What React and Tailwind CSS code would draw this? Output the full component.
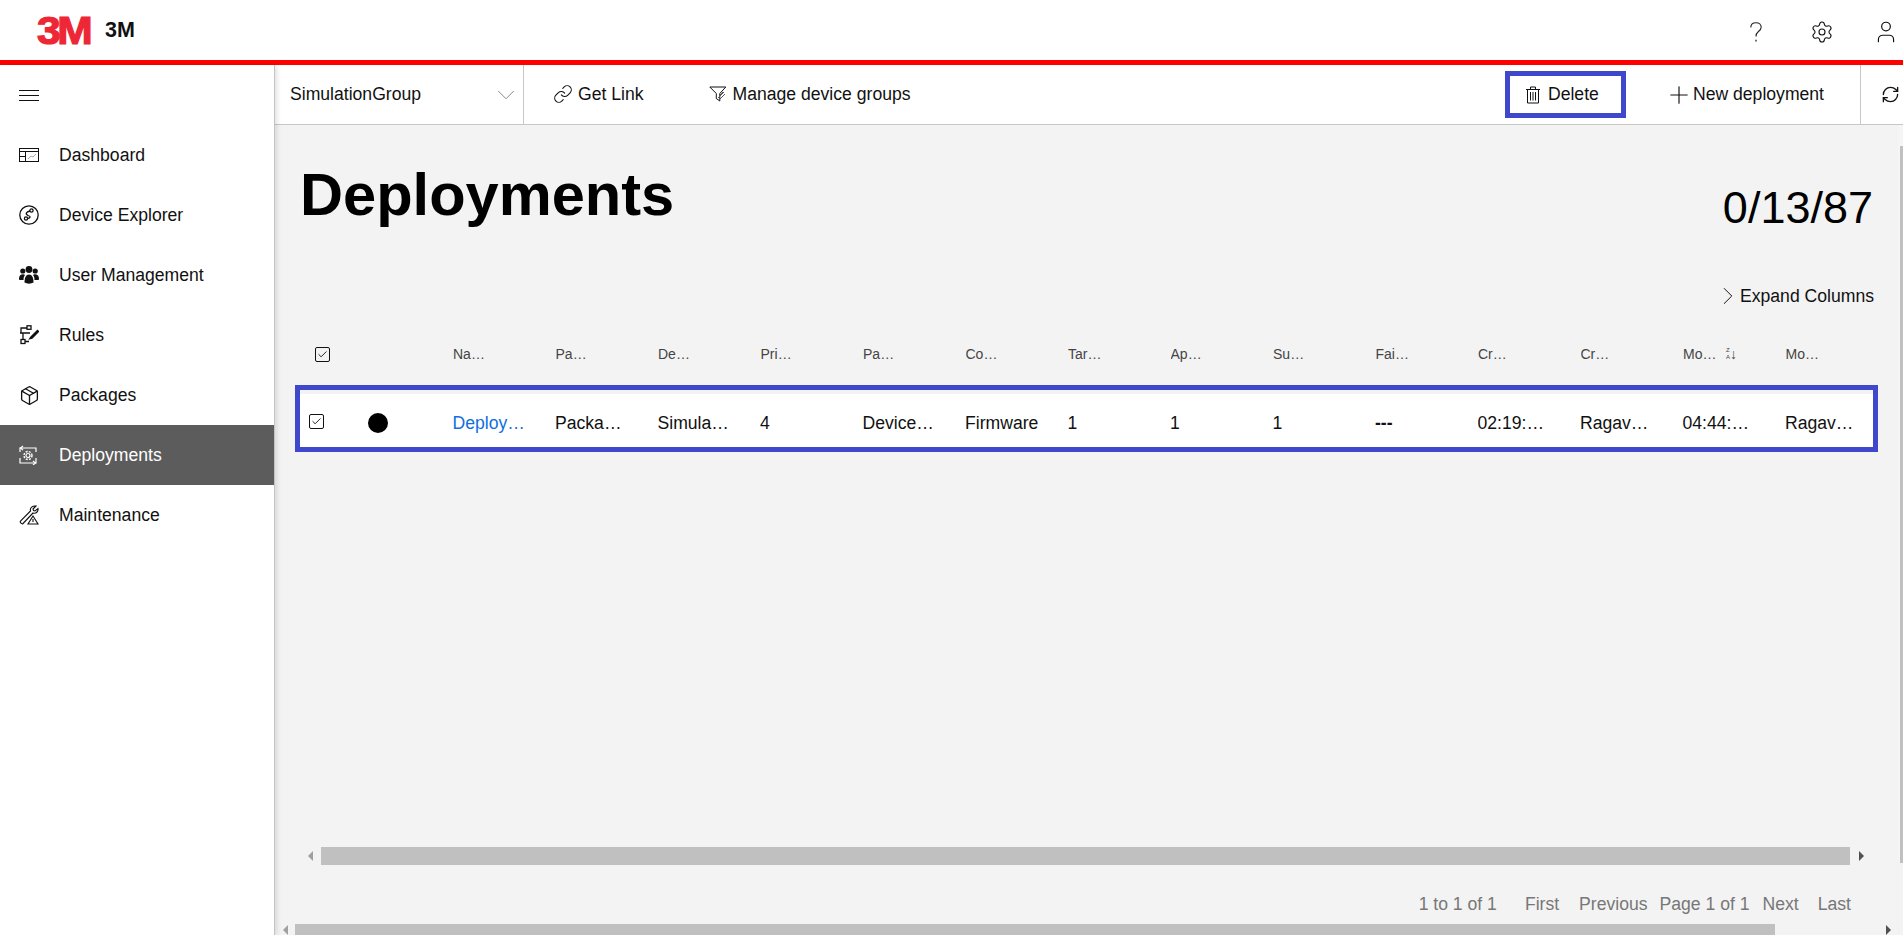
import React from "react";
import { Settings, User, ChevronDown, ChevronRight, Link, Plus, RefreshCw, Package, Check } from "lucide-react";

const DashboardIcon = () => (
  <svg width="20" height="14" viewBox="0 0 20 14" fill="none" stroke="#111" strokeWidth="1">
    <rect x="0.5" y="0.5" width="19" height="13" />
    <path d="M0.5 3.5H19.5M6.5 3.5V13.5M0.5 8.5H6.5" />
    <path d="M9 11l3-3 2 1 3-3" stroke="#aaa" />
  </svg>
);

const ExplorerIcon = () => (
  <svg width="20" height="20" viewBox="0 0 20 20" fill="none" stroke="#111" strokeWidth="1.3">
    <circle cx="10" cy="10" r="9.2" />
    <circle cx="12.5" cy="5.5" r="1.6" />
    <circle cx="7" cy="13.5" r="1.6" />
    <path d="M11 6c-4 1-5 3-2 4.500 3 1 3 2.500-.8 3.200" />
  </svg>
);

const UsersIcon = () => (
  <svg width="20" height="18" viewBox="0 0 20 18" fill="#111">
    <circle cx="3.800" cy="5" r="2.600" />
    <circle cx="16.200" cy="5" r="2.600" />
    <circle cx="10" cy="3.500" r="3.400" />
    <path d="M0 12.500C0 9.800 1.800 8.300 4 8.300c.9 0 1.500.3 2 .7-1 1.200-1.500 2.800-1.500 5H1c-.6 0-1-.5-1-1.500z" />
    <path d="M20 12.500c0-2.700-1.800-4.200-4-4.200-.9 0-1.500.3-2 .7 1 1.200 1.500 2.800 1.500 5H19c.6 0 1-.5 1-1.500z" />
    <path d="M5.500 16.500c0-5 1.500-8 4.500-8s4.500 3 4.500 8c-2.500 1.500-6.500 1.500-9 0z" />
  </svg>
);

const RulesIcon = () => (
  <svg width="20" height="20" viewBox="0 0 20 20" fill="none" stroke="#111" strokeWidth="1.3">
    <rect x="8" y="0.800" width="4" height="3.500" />
    <rect x="2" y="14.500" width="4" height="4" />
    <path d="M8 3H2v5h9M1 8h2M4 8v6.500M6 16.500h4" />
    <path d="M12 12l6.500-6.500 1 1L13 13l-2 .5z" strokeWidth="1.500" />
  </svg>
);

const DeployIcon = () => (
  <svg width="18" height="20" viewBox="0 0 18 20" fill="none" stroke="#fff" strokeWidth="1.2">
    <path d="M1 7V3h16v4M1 13v5h16v-5" />
    <path d="M4 1L1.500 3 4 5M14 16l2.500 2-2.500 2" />
    <circle cx="9" cy="10.500" r="2" />
    <circle cx="9" cy="10.500" r="4" strokeDasharray="2 1.200" strokeWidth="1.400" />
  </svg>
);

const MaintenanceIcon = () => (
  <svg width="20" height="20" viewBox="0 0 20 20" fill="none" stroke="#111" strokeWidth="1.1">
    <path d="M17 1l-3 3 .5 1.500L16 6l3-2.500c.5 3-2 5.500-5 4.500L4 18.500c-1 1-3.500-1-2.500-2.500L11.500 6c-.8-3 2-5.500 5.500-5z" />
    <path d="M14 11l-5 8h10z" />
    <path d="M14 14v3" />
  </svg>
);

const FunnelIcon = () => (
  <svg width="18" height="17" viewBox="0 0 18 17" fill="none" stroke="#111" strokeWidth="1">
    <path d="M0.800 1h16l-6 6.500V15l-3.500-2.500v-5z" />
    <path d="M9 12l6-6M11 13l5-5M10 10l4-4" stroke="#555" />
  </svg>
);

const HelpIcon = () => (
  <svg width="12" height="20" viewBox="0 0 12 20" fill="none" stroke="#222" strokeWidth="1.1">
    <path d="M0.800 5.500C0.800 2.500 3 0.700 6 0.700s5.200 2 5.200 4.500c0 2.300-1.500 3.400-3 4.500C6.800 10.800 6 11.800 6 14.500" />
    <path d="M6 17.800v1.600" strokeWidth="1.300" />
  </svg>
);

const TrashIcon = () => (
  <svg width="14" height="18" viewBox="0 0 14 18" fill="none" stroke="#111" strokeWidth="1">
    <path d="M0 3.500h14M4.500 3.500V1h5v2.500" />
    <path d="M1.500 3.500v13.500h11V3.500" />
    <path d="M4.500 6v8.500M7 6v8.500M9.500 6v8.500" />
  </svg>
);

const navItems = [
  { label: "Dashboard", icon: <DashboardIcon /> },
  { label: "Device Explorer", icon: <ExplorerIcon /> },
  { label: "User Management", icon: <UsersIcon /> },
  { label: "Rules", icon: <RulesIcon /> },
  { label: "Packages", icon: <Package size={21} strokeWidth={1.5} color="#111" /> },
  { label: "Deployments", icon: <DeployIcon />, active: true },
  { label: "Maintenance", icon: <MaintenanceIcon /> },
];

const columns = [
  { head: "Name", value: "Deployment1", link: true },
  { head: "Package", value: "Package1" },
  { head: "Device group", value: "SimulationGroup" },
  { head: "Priority", value: "4" },
  { head: "Package type", value: "DeviceConfig" },
  { head: "Config type", value: "Firmware" },
  { head: "Targeted", value: "1" },
  { head: "Applied", value: "1" },
  { head: "Succeeded", value: "1" },
  { head: "Failed", value: "---", bold: true },
  { head: "Created on", value: "02:19:45 PM" },
  { head: "Created by", value: "Ragavendra" },
  { head: "Modified on", value: "04:44:10 PM", sorted: true },
  { head: "Modified by", value: "Ragavendra" },
];

const Box = () => (
  <span className="flex h-[15px] w-[15px] items-center justify-center rounded-[2px] border border-[#111]">
    <Check size={11} strokeWidth={2} color="#111" />
  </span>
);

const Arrow = ({ left, color = "#a0a0a0" }) => (
  <span
    className={`h-0 w-0 border-y-[5px] border-y-transparent ${left ? "border-r-[5px]" : "border-l-[5px]"}`}
    style={left ? { borderRightColor: color } : { borderLeftColor: color }}
  />
);

export default function App() {
  return (
    <div className="flex h-screen flex-col overflow-hidden bg-white text-[17.6px] text-[#111] font-['Liberation_Sans',Arial,sans-serif]">
      <header className="flex h-[65px] shrink-0 items-center border-b-[5px] border-[#ff0000] bg-white pl-[37px]">
        <span className="mt-[1px] w-[54px] origin-left scale-x-[1.12] text-[38px] font-bold leading-none tracking-[-3px] text-[#ee2737] [-webkit-text-stroke:1.2px_#ee2737]">3M</span>
        <span className="ml-[14px] mt-[1px] text-[21.500px] font-bold">3M</span>
        <div className="ml-auto mt-[4px] flex items-center">
          <HelpIcon />
          <Settings size={24} strokeWidth={1.1} className="ml-[48px]" />
          <User size={26} strokeWidth={1.1} className="ml-[39px] mr-[4px]" />
        </div>
      </header>

      <div className="flex min-h-0 flex-1">
        <aside className="z-10 w-[275px] shrink-0 border-r border-[#c4c4c4] bg-white shadow-[2px_0_5px_rgba(0,0,0,0.12)]">
          <div className="flex h-[60px] flex-col justify-center gap-[4px] pl-[19px]">
            <span className="h-px w-[20px] bg-[#111]" />
            <span className="h-px w-[20px] bg-[#111]" />
            <span className="h-px w-[20px] bg-[#111]" />
          </div>
          {navItems.map((item) => (
            <div
              key={item.label}
              className={`flex h-[60px] items-center ${item.active ? "bg-[#5c5c5c] text-white" : ""}`}
            >
              <span className="flex w-[59px] justify-start pl-[19px]">{item.icon}</span>
              {item.label}
            </div>
          ))}
        </aside>

        <main className="flex min-w-0 flex-1 flex-col bg-[#f3f3f3]">
          <div className="flex h-[60px] shrink-0 items-center border-b border-[#c8c8c8] bg-white">
            <div className="flex h-full w-[249px] items-center justify-between border-r border-[#c8c8c8] pl-[15px] pr-[2px]">
              SimulationGroup
              <ChevronDown size={30} strokeWidth={0.8} color="#888" />
            </div>
            <div className="ml-[29px] flex items-center gap-[5px]">
              <Link size={20} strokeWidth={1.3} />
              Get Link
            </div>
            <div className="ml-[65px] flex items-center gap-[6px]">
              <FunnelIcon />
              Manage device groups
            </div>
            <div className="ml-auto flex h-[47px] w-[121px] items-center border-[5px] border-[#3f48cc] pl-[16px]">
              <TrashIcon />
              <span className="ml-[8px]">Delete</span>
            </div>
            <div className="ml-[39px] flex items-center">
              <Plus size={28} strokeWidth={1} />
              <span>New deployment</span>
            </div>
            <div className="ml-[36px] flex h-full w-[43px] items-center border-l border-[#c8c8c8] pl-[20px]">
              <RefreshCw size={19} strokeWidth={1.7} />
            </div>
          </div>

          <div className="relative flex min-h-0 flex-1 flex-col pl-[20px] pr-[25px]">
            <div className="flex items-start justify-between pt-[30px]">
              <h1 className="pl-[5px] text-[59.600px] font-bold leading-[80px] text-black">Deployments</h1>
              <span className="mr-[5px] mt-[28px] text-[45px] leading-[50px] text-black">0/13/87</span>
            </div>
            <div className="mt-[51px] flex items-center justify-end pr-[4px] leading-[20px]">
              <ChevronRight size={30} strokeWidth={0.8} className="my-[-5px]" />
              <span className="ml-[-3px]">Expand Columns</span>
            </div>

            <div className="mt-[38px] flex h-[20px] items-center overflow-hidden text-[14px] text-[#444]">
              <span className="flex w-[158px] shrink-0 pl-[20px]"><Box /></span>
              {columns.map((col) => (
                <div key={col.head} className="flex w-[102.500px] shrink-0 items-center">
                  <span className="max-w-[36px] truncate">{col.head}</span>
                  {col.sorted && (
                    <span className="ml-[7px] flex shrink-0 items-center text-[6px] leading-[7px]">
                      <span className="flex flex-col">
                        <span>Z</span>
                        <span>A</span>
                      </span>
                      <span className="text-[14px] leading-none">↓</span>
                    </span>
                  )}
                </div>
              ))}
            </div>

            <div className="mt-[21px] h-[67px] border-[5px] border-[#3f48cc] bg-[#f3f3f3]">
              <div className="mt-[4px] flex h-[53px] items-center overflow-hidden bg-white">
                <span className="mt-[2px] flex w-[68px] shrink-0 pl-[9px]"><Box /></span>
                <span className="flex w-[84.500px] shrink-0"><span className="mt-[4px] h-[20px] w-[20px] rounded-full bg-black" /></span>
                {columns.map((col) => (
                  <div key={col.head} className="mt-[5px] w-[102.500px] shrink-0 pr-[27px]">
                    <div className={`truncate ${col.link ? "text-[#0f6fde]" : ""} ${col.bold ? "font-bold" : ""}`}>{col.value}</div>
                  </div>
                ))}
              </div>
            </div>

            <div className="ml-[5px] mr-[6px] mt-auto flex h-[18px] items-center">
              <span className="flex w-[21px] justify-center"><Arrow left /></span>
              <span className="h-full flex-1 bg-[#c0c0c0]" />
              <span className="flex w-[22px] justify-center"><Arrow color="#505050" /></span>
            </div>
            <div className="mb-[8px] mt-[27px] flex h-[24px] items-center justify-end pr-[27px] text-[#777]">
              <span>1 to 1 of 1</span>
              <span className="ml-[28px]">First</span>
              <span className="ml-[20px]">Previous</span>
              <span className="ml-[12px]">Page 1 of 1</span>
              <span className="ml-[13px]">Next</span>
              <span className="ml-[19px]">Last</span>
            </div>

            <div className="absolute right-0 top-0 h-[738px] w-[5px] bg-[#f5f5f5] pl-[2px] pt-[21px]">
              <div className="h-[717px] w-[3px] bg-[#c0c0c0]" />
            </div>
          </div>

          <div className="flex h-[11px] shrink-0 items-center">
            <span className="flex w-[20px] justify-center"><Arrow left /></span>
            <span className="h-full w-[1480px] bg-[#c0c0c0]" />
            <span className="flex flex-1 justify-end pr-[12px]"><Arrow color="#505050" /></span>
          </div>
        </main>
      </div>
    </div>
  );
}
